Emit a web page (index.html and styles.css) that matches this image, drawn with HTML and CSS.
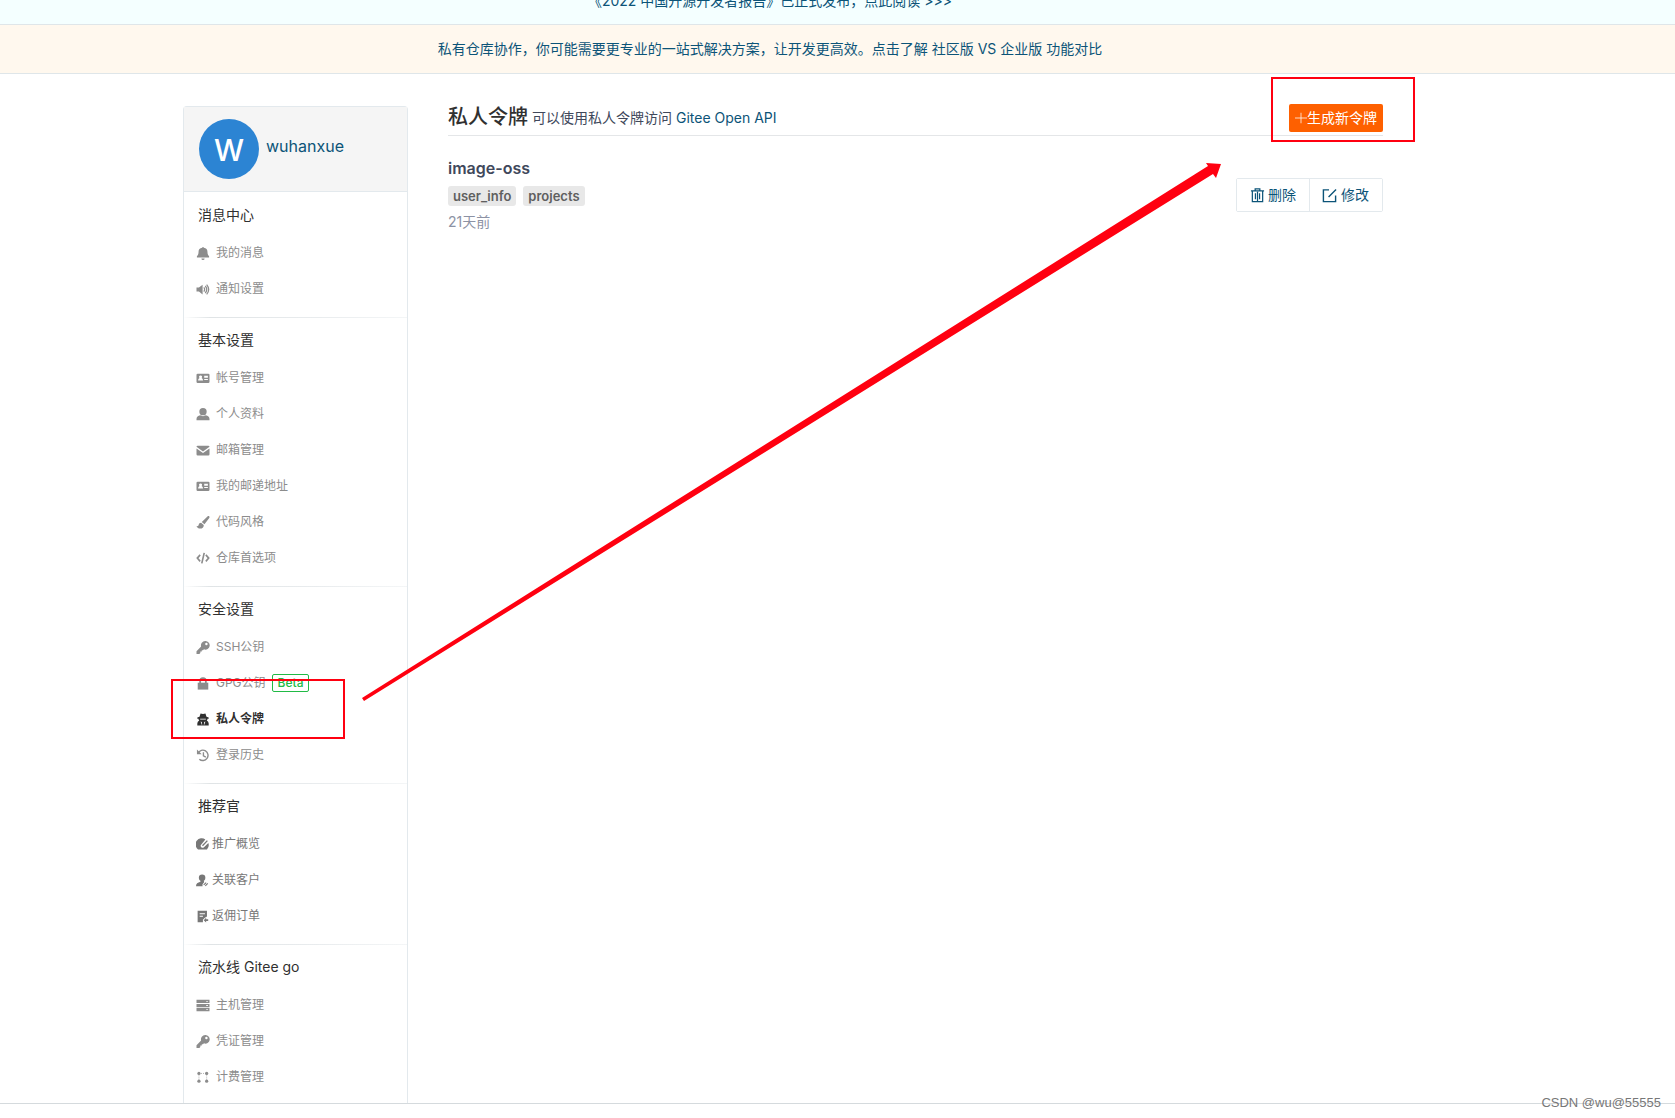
FILE: index.html
```html
<!DOCTYPE html>
<html lang="zh-CN">
<head>
<meta charset="utf-8">
<title>私人令牌 - Gitee</title>
<link rel="stylesheet" href="styles.css">
</head>
<body>
<svg class="sprite" aria-hidden="true">
  <symbol id="i-bell" viewBox="0 0 16 16"><path d="M8 0a1 1 0 0 1 1 1c3 .5 4.500 2.300 4.500 5 0 2.500.7 4 2 5.500V13H.5v-1.500C1.800 10 2.500 8.500 2.500 6c0-2.700 1.500-4.500 4.500-5a1 1 0 0 1 1-1zM6 14h4a2 2 0 0 1-4 0z"/></symbol>
  <symbol id="i-sound" viewBox="0 0 16 16"><path d="M0 5.500h3L7.500 2v12L3 10.500H0z"/><path d="M9 5.500q2 2.500 0 5M10.800 3.700q3.600 4.300 0 8.600M12.500 2q5 6 0 12" fill="none" stroke="currentColor" stroke-width="1.500"/></symbol>
  <symbol id="i-card" viewBox="0 0 16 16"><path fill-rule="evenodd" d="M1.500 2h13A1.500 1.500 0 0 1 16 3.500V12a1.500 1.500 0 0 1-1.500 1.500h-13A1.500 1.500 0 0 1 0 12V3.500A1.500 1.500 0 0 1 1.500 2zM5 4.200a1.800 1.800 0 0 0-1.200 3.200C2.600 8 2 9 2 10.500h6c0-1.500-.6-2.500-1.800-3.100A1.800 1.800 0 0 0 5 4.200zM9.500 4.500V7H14V4.500zm0 4v1.300H14V8.500z"/></symbol>
  <symbol id="i-user" viewBox="0 0 16 16"><circle cx="8" cy="4.500" r="4.500"/><path d="M0 15v-1.500C0 11 2 9.500 4.500 9Q8 11 11.500 9C14 9.500 16 11 16 13.500V15z"/></symbol>
  <symbol id="i-mail" viewBox="0 0 16 16"><path d="M0 3.500A1.500 1.500 0 0 1 1.500 2h13A1.500 1.500 0 0 1 16 3.500L8 9.200zM0 5.500l8 5.700 8-5.700v7a1.500 1.500 0 0 1-1.500 1.500h-13A1.500 1.500 0 0 1 0 12.500z"/></symbol>
  <symbol id="i-brush" viewBox="0 0 16 16"><path d="M15.600.4c.6.6.5 1.300.1 2L9.800 10.300 6.500 7.500 13.500.6c.7-.6 1.500-.7 2.100-.2zM5.600 8.300l3.300 2.800c.3 2.900-1.700 4.400-4.300 4.400-2.200 0-3.600-1-4.600-3.200 2 .6 2.400-.2 2.700-1.500.3-1.500 1.300-2.500 2.900-2.500z"/></symbol>
  <symbol id="i-code" viewBox="0 0 16 16"><path d="M4.500 3.500 1 7.500l3.500 4M11.500 3.500 15 7.500l-3.500 4M9.500 1l-3 13" fill="none" stroke="currentColor" stroke-width="2"/></symbol>
  <symbol id="i-key" viewBox="0 0 16 16"><path fill-rule="evenodd" d="M10.700 0a5.300 5.300 0 1 1-1.500 10.300L8 11.500H6.500V13H4.700v1.800L3.500 16H0v-3.500l5.700-5.700A5.300 5.300 0 0 1 10.700 0zm1.500 2.300a1.500 1.500 0 1 0 0 3 1.500 1.500 0 0 0 0-3z"/></symbol>
  <symbol id="i-lock" viewBox="0 0 16 16"><path d="M1.500 7h13v8.500h-13z"/><path d="M4.500 7.500V5a3.500 3.500 0 0 1 7 0v2.500" fill="none" stroke="currentColor" stroke-width="2.200"/></symbol>
  <symbol id="i-spy" viewBox="0 0 16 16"><path fill-rule="evenodd" d="M5 .5q3 1.200 6 0L12.300 4.500 15 5.500V7h-1.500q.2 1.300-.9 2.300Q15 10.500 15 13v2.500H1V13q0-2.500 2.400-3.700Q2.300 8.300 2.500 7H1V5.500l2.700-1zM4.500 7v1h7V7zM5 10.500l1.500 4H7L6.500 11zm6 0-1.500.5L9 14.500h.5z"/></symbol>
  <symbol id="i-history" viewBox="0 0 16 16"><path d="M2 5A6.400 6.400 0 1 1 3.500 12.500M8.500 4V8.500l3 1.500" fill="none" stroke="currentColor" stroke-width="1.700"/><path d="M.5.5v6h6z"/></symbol>
  <symbol id="i-gauge" viewBox="0 0 16 16"><path d="M11.500 1.800A7.500 7.500 0 0 0 2.500 14h11a7.500 7.500 0 0 0 1.700-7.800L9.800 11.300A2.300 2.300 0 0 1 6.500 8z"/><path d="M8 9.500 14 3.200" stroke="currentColor" stroke-width="1.600"/></symbol>
  <symbol id="i-client" viewBox="0 0 16 16"><circle cx="7.500" cy="4.500" r="4"/><path d="M5.500 7.500h4L10 10l-2 2.500V15H0c0-3.500 2-4.500 5.500-5.500z"/><path d="m9.500 13.500 3-3M11.500 14.500l3-3" stroke="currentColor" stroke-width="1.300"/></symbol>
  <symbol id="i-order" viewBox="0 0 16 16"><path fill-rule="evenodd" d="M2 1h11.500v7L11 9.500 8.500 12v3H2zm2.500 3v1.200H11V4zm0 3v1.200h4V7z"/><path d="m9.500 12.500 3-3v2H15v2h-2.500v2z"/></symbol>
  <symbol id="i-server" viewBox="0 0 16 16"><path fill-rule="evenodd" d="M0 1h16v4H0zm12 1.500v1h2v-1zM0 6h16v4H0zm12 1.500v1h2v-1zM0 11h16v4H0zm12 1.500v1h2v-1z"/></symbol>
  <symbol id="i-nodes" viewBox="0 0 16 16"><circle cx="3" cy="3" r="2"/><circle cx="12.500" cy="3" r="2"/><circle cx="3" cy="12.500" r="2"/><circle cx="12.500" cy="12.500" r="2"/><path d="M3 3v9.500M12.500 3v9.500M3 3h9.500" fill="none" stroke="currentColor" stroke-dasharray="1 1.500"/></symbol>
  <symbol id="i-trash" viewBox="0 0 16 16"><path d="M1 3h14M5.500 3V1h5v2M2.500 3v11.500h11V3M5.800 5.500v6.500M8 4v10M10.200 5.500v6.500" fill="none" stroke="currentColor" stroke-width="1.300"/></symbol>
  <symbol id="i-edit" viewBox="0 0 16 16"><path d="M7.500 2H1.500v12.500h13V8M7 9.500 15 1.500" fill="none" stroke="currentColor" stroke-width="1.500"/></symbol>
  <symbol id="i-plus" viewBox="0 0 16 16"><path d="M8 1v14M0 8h16" stroke="currentColor" stroke-width="1"/></symbol>
</svg>

<div class="notice notice-report"><a href="#">《2022 中国开源开发者报告》已正式发布，点此阅读 &gt;&gt;&gt;</a></div>
<div class="notice notice-plan"><a href="#">私有仓库协作，你可能需要更专业的一站式解决方案，让开发更高效。点击了解 社区版 VS 企业版 功能对比</a></div>

<div class="page">
  <div class="container">
    <aside class="sidebar">
      <div class="profile">
        <span class="avatar">W</span>
        <a class="username" href="#">wuhanxue</a>
      </div>
      <nav>
        <section class="group">
          <h2>消息中心</h2>
          <a href="#"><svg><use href="#i-bell"/></svg>我的消息</a>
          <a href="#"><svg><use href="#i-sound"/></svg>通知设置</a>
        </section>
        <section class="group">
          <h2>基本设置</h2>
          <a href="#"><svg><use href="#i-card"/></svg>帐号管理</a>
          <a href="#"><svg><use href="#i-user"/></svg>个人资料</a>
          <a href="#"><svg><use href="#i-mail"/></svg>邮箱管理</a>
          <a href="#"><svg><use href="#i-card"/></svg>我的邮递地址</a>
          <a href="#"><svg><use href="#i-brush"/></svg>代码风格</a>
          <a href="#"><svg><use href="#i-code"/></svg>仓库首选项</a>
        </section>
        <section class="group">
          <h2>安全设置</h2>
          <a href="#"><svg><use href="#i-key"/></svg>SSH公钥</a>
          <a href="#"><svg><use href="#i-lock"/></svg>GPG公钥<span class="beta">Beta</span></a>
          <a class="active marked" href="#"><svg><use href="#i-spy"/></svg>私人令牌</a>
          <a href="#"><svg><use href="#i-history"/></svg>登录历史</a>
        </section>
        <section class="group compact">
          <h2>推荐官</h2>
          <a href="#"><svg><use href="#i-gauge"/></svg>推广概览</a>
          <a href="#"><svg><use href="#i-client"/></svg>关联客户</a>
          <a href="#"><svg><use href="#i-order"/></svg>返佣订单</a>
        </section>
        <section class="group">
          <h2>流水线 Gitee go</h2>
          <a href="#"><svg><use href="#i-server"/></svg>主机管理</a>
          <a href="#"><svg><use href="#i-key"/></svg>凭证管理</a>
          <a href="#"><svg><use href="#i-nodes"/></svg>计费管理</a>
        </section>
      </nav>
    </aside>

    <main class="content">
      <header class="title-bar">
        <h1>私人令牌</h1>
        <p>可以使用私人令牌访问 <a href="#">Gitee Open API</a></p>
        <div class="new-token"><button type="button"><svg><use href="#i-plus"/></svg>生成新令牌</button></div>
      </header>
      <article class="token">
        <div class="token-info">
          <h3>image-oss</h3>
          <div class="scopes"><span>user_info</span><span>projects</span></div>
          <time>21天前</time>
        </div>
        <div class="actions">
          <button type="button"><svg><use href="#i-trash"/></svg>删除</button>
          <button type="button"><svg><use href="#i-edit"/></svg>修改</button>
        </div>
      </article>
    </main>

    <svg class="arrow" viewBox="0 0 1200 1000" aria-hidden="true"><path d="M179 592 1025 60 1023 57 1038 58 1033 72 1030 68 181 595z"/></svg>
  </div>
</div>
<footer class="footer"><span>CSDN @wu@55555</span></footer>
</body>
</html>
```
FILE: styles.css
```css
*, *::after { box-sizing: border-box; }
body {
  margin: 0;
  background: #fff;
  color: #40485b;
  font: 14px/20px Inter, "Noto Sans CJK SC", sans-serif;
  overflow-x: hidden;
}
a { color: #0c5478; text-decoration: none; }
h1, h2, h3, p { margin: 0; font-weight: 400; }
button { font: inherit; cursor: pointer; }
svg { fill: currentColor; flex: none; }
.sprite { position: absolute; width: 0; height: 0; }

.notice {
  display: flex;
  align-items: center;
  justify-content: center;
  padding-right: 135px;
  border-bottom: 1px solid #dfe6e9;
}
.notice-report { height: 25px; background: #f4ffff; align-items: flex-end; padding-bottom: 13px; overflow: hidden; }
.notice-plan { height: 49px; background: #fff8ee; }

.page { padding: 32px 109px 0 0; }
.container {
  position: relative;
  display: flex;
  align-items: stretch;
  gap: 40px;
  max-width: 1200px;
  margin: 0 auto;
}

.sidebar {
  flex: 0 0 225px;
  border: 1px solid #e3e9ed;
  border-bottom: 0;
  border-radius: 4px 4px 0 0;
}
.profile {
  display: flex;
  gap: 7px;
  padding: 12px 15px;
  background: #f5f5f5;
  border-bottom: 1px solid #e3e9ed;
}
.avatar {
  width: 60px;
  height: 60px;
  border-radius: 50%;
  background: #2c84d3;
  color: #fff;
  font-size: 30px;
  font-weight: 500;
  line-height: 62px;
  text-align: center;
}
.username { font-size: 16px; line-height: 54px; }
.sidebar nav { padding-top: 1px; }
.group {
  display: flex;
  flex-direction: column;
  padding: 10px 12px;
  border-bottom: 1px solid;
  border-image: linear-gradient(90deg, #fff, #e0e4e6 12%, #e9ecee 60%, #f4f6f7) 1;
}
.group:last-child { border: 0; padding-bottom: 8px; }
.group h2 {
  padding-left: 2px;
  margin-bottom: 8px;
  color: #303030;
  font-size: 14px;
  line-height: 24px;
}
.group a {
  position: relative;
  display: flex;
  align-items: center;
  gap: 6px;
  height: 36px;
  color: #8c8c8c;
  font-size: 12px;
}
.group a svg { width: 14px; height: 13px; }
.compact a { gap: 3px; color: #777; }
.compact a svg { width: 13px; }
.group .active { color: #303030; font-weight: 600; }
.beta {
  padding: 0 5px;
  border: 1px solid #21ba45;
  border-radius: 2px;
  color: #21ba45;
  font-size: 12px;
  font-weight: 500;
  line-height: 16px;
}
.marked::after {
  content: "";
  position: absolute;
  left: -25px;
  top: -22px;
  width: 174px;
  height: 60px;
  border: 2px solid #ff0010;
}

.content { flex: 1; min-width: 0; }
.title-bar {
  display: flex;
  align-items: center;
  gap: 4px;
  height: 30px;
  padding-bottom: 8px;
  border-bottom: 1px solid #e4e6e8;
}
.title-bar h1 { color: #303030; font-size: 20px; line-height: 24px; font-weight: 500; }
.title-bar p { padding-top: 2px; }
.new-token { position: relative; margin: 2px 0 0 auto; }
.new-token::after {
  content: "";
  position: absolute;
  inset: -27px -32px -10px -18px;
  border: 2px solid #ff0010;
  pointer-events: none;
}
.new-token button {
  display: flex;
  align-items: center;
  height: 28px;
  padding: 0 6px;
  border: 0;
  border-radius: 2px;
  background: #fe6000;
  color: #fff;
}
.new-token svg { width: 12px; height: 12px; }

.token { display: flex; justify-content: space-between; align-items: flex-end; padding-top: 20px; }
.token-info { display: flex; flex-direction: column; gap: 6px; }
.token h3 { font-size: 16px; line-height: 24px; font-weight: 600; }
.scopes { display: flex; gap: 7px; }
.scopes span {
  padding: 0 5px;
  border-radius: 3px;
  background: #e8e8e8;
  color: #5f5f5f;
  font-size: 13px;
  font-weight: 600;
  line-height: 20px;
}
.token time { color: #8c92a4; }
.actions { display: flex; margin-bottom: 20px; border: 1px solid #e3e9ed; border-radius: 2px; }
.actions button {
  display: flex;
  align-items: center;
  gap: 3px;
  height: 32px;
  padding: 0 13px;
  border: 0;
  background: #fff;
  color: #0c5478;
}
.actions button + button { padding-left: 12px; gap: 4px; border-left: 1px solid #e3e9ed; }
.actions svg { width: 15px; height: 15px; }

.arrow {
  position: absolute;
  left: 0;
  top: 0;
  width: 1200px;
  height: 1000px;
  color: #ff0010;
  pointer-events: none;
}

.footer {
  display: flex;
  justify-content: flex-end;
  padding-right: 14px;
  border-top: 1px solid #d5dadd;
}
.footer span { margin-top: -11px; color: #777; font: 13px/20px "Liberation Sans", sans-serif; }
```
